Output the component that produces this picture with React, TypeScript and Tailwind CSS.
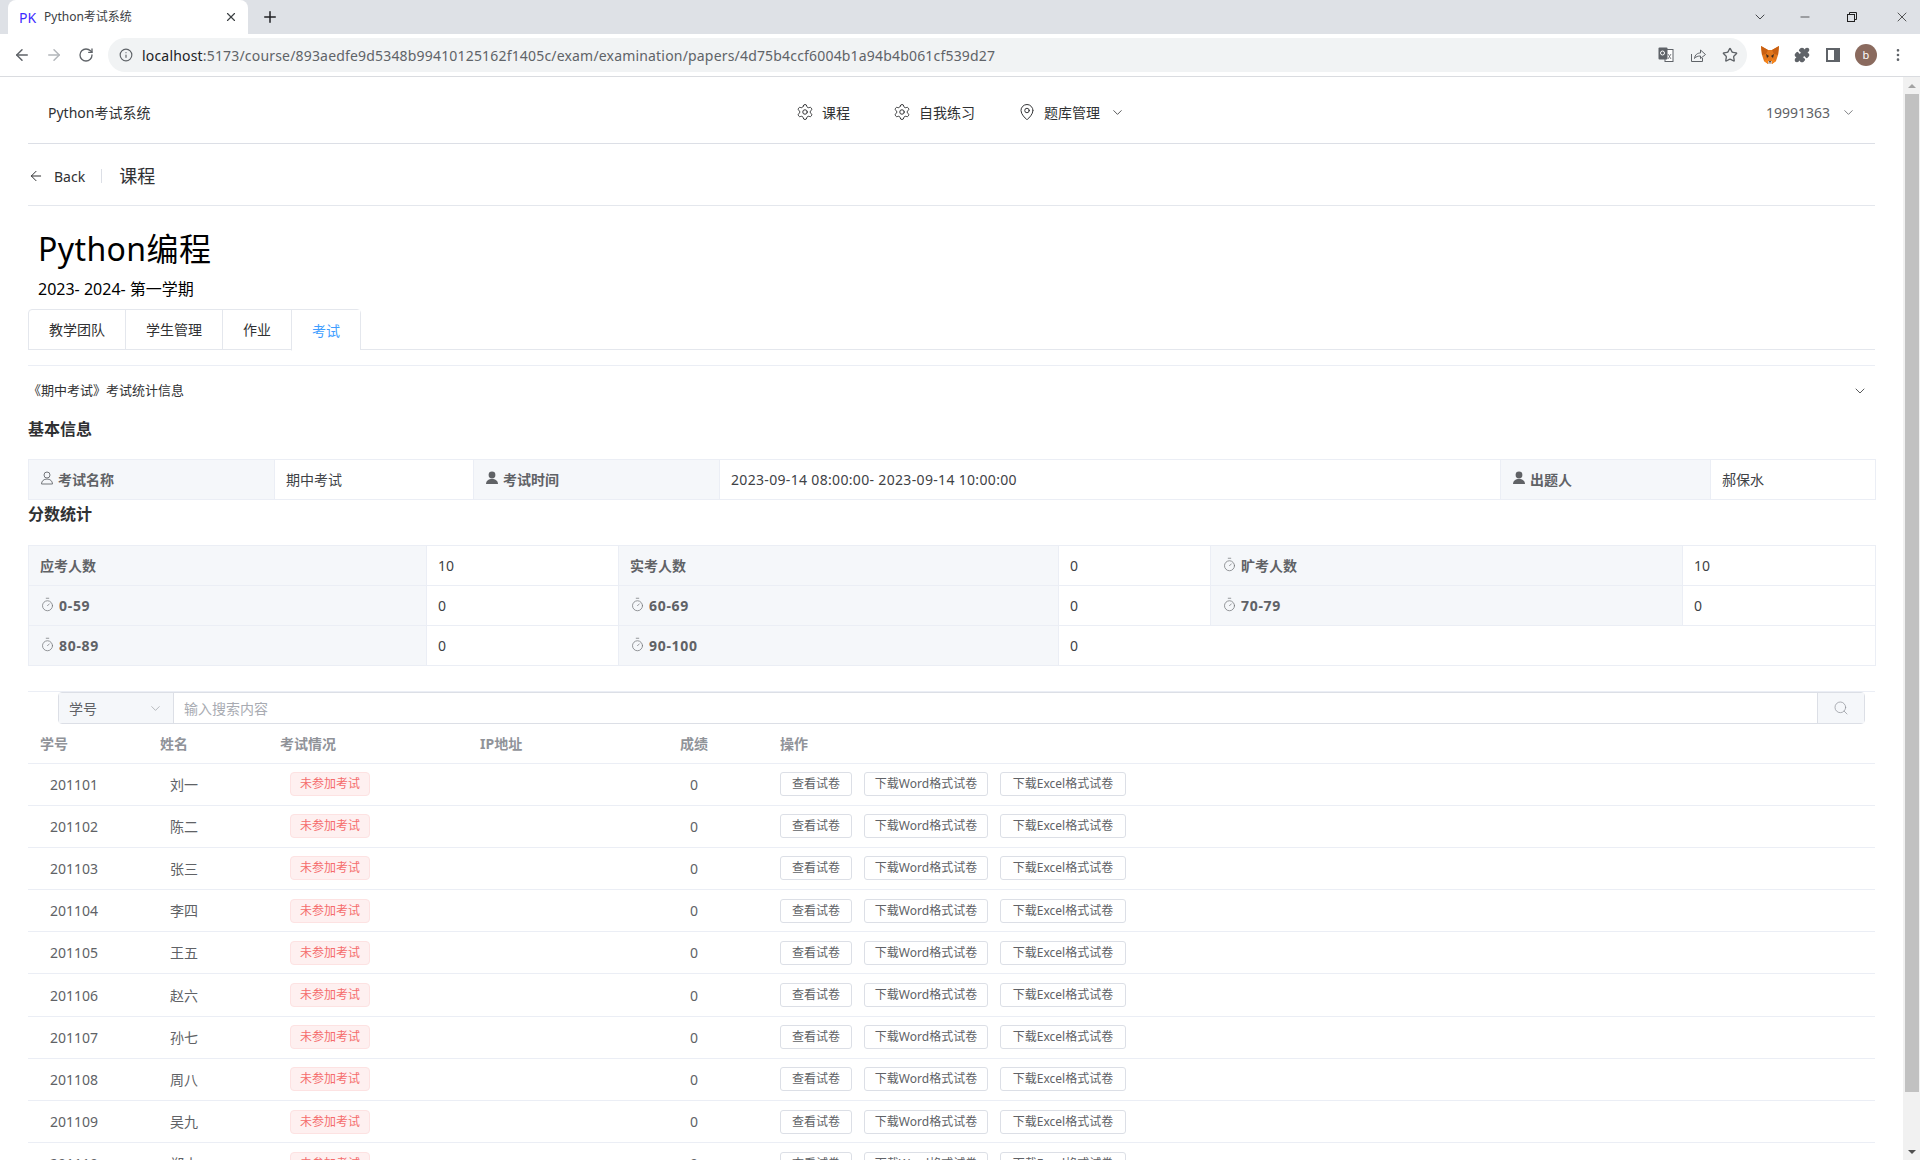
import { ArrowLeft, ArrowRight, ChevronDown, EllipsisVertical, Info, MapPin, Minus, Plus, Puzzle, RotateCw, Search, Settings, Star, Timer, X } from "lucide-react";

const STUDENTS = [
  ["201101", "刘一"],
  ["201102", "陈二"],
  ["201103", "张三"],
  ["201104", "李四"],
  ["201105", "王五"],
  ["201106", "赵六"],
  ["201107", "孙七"],
  ["201108", "周八"],
  ["201109", "吴九"],
  ["201110", "郑十"],
];

function UserOutline() {
  return (
    <svg viewBox="0 0 14 14" className="w-[14px] h-[14px] text-[#73767a] shrink-0 -mt-[3px]" fill="none" stroke="currentColor" strokeWidth="1">
      <circle cx="7" cy="4" r="3" />
      <path d="M1.500 13c0-3 2.400-5 5.500-5s5.500 2 5.500 5z" />
    </svg>
  );
}

function UserFilled() {
  return (
    <svg viewBox="0 0 14 14" className="w-[14px] h-[14px] text-[#606266] shrink-0 -mt-[3px]" fill="currentColor">
      <circle cx="7" cy="4" r="3.400" />
      <path d="M1 13c0-3 2.400-5 6-5s6 2 6 5z" />
    </svg>
  );
}

function Fox() {
  return (
    <svg viewBox="0 0 20 20" className="w-[20px] h-[20px]">
      <polygon points="1,1 8,5 12,5 19,1 18,10 16,16 12,19 8,19 4,16 2,10" fill="#e2761b" />
      <polygon points="1,1 8,5 6,9 2,10" fill="#c95f10" />
      <polygon points="19,1 12,5 14,9 18,10" fill="#c95f10" />
      <polygon points="6,9 9,11 7,13" fill="#3b2a20" />
      <polygon points="14,9 11,11 13,13" fill="#3b2a20" />
      <polygon points="8,16 12,16 12,19 8,19" fill="#d7c1b3" />
      <polygon points="9,16 11,16 10,18" fill="#2a2a2a" />
      <polygon points="4,16 8,14 8,19" fill="#f6851b" />
      <polygon points="16,16 12,14 12,19" fill="#f6851b" />
    </svg>
  );
}

function Translate() {
  return (
    <svg viewBox="0 0 16 16" className="w-[16px] h-[16px]">
      <rect x="7" y="2.500" width="8" height="12" fill="#fff" stroke="#5f6368" />
      <rect x="0.500" y="0.500" width="9" height="12" rx="1" fill="#5f6368" />
      <circle cx="4.500" cy="6" r="2" fill="none" stroke="#fff" />
      <path d="M10 7l3 5M13 7l-3 5" stroke="#5f6368" strokeWidth="0.800" />
    </svg>
  );
}

function ShareIcon() {
  return (
    <svg viewBox="0 0 16 16" className="w-[16px] h-[16px]" fill="none" stroke="#5f6368" strokeWidth="1">
      <path d="M1.500 7v7.500h11V11" />
      <path d="M4.500 11.500c.5-4 3-5.500 6-5.500V3l5 4.500-5 4V9c-2.500 0-4.500.5-6 2.500z" />
    </svg>
  );
}

function Restore() {
  return (
    <svg viewBox="0 0 10 10" className="w-[10px] h-[10px]" fill="none" stroke="#1f1f1f" strokeWidth="1">
      <rect x="0.500" y="2.500" width="7" height="7" />
      <path d="M2.500 2.500v-2h7v7h-2" />
    </svg>
  );
}

function BrowserChrome() {
  return (
    <div className="shrink-0 border-b border-[#dadce0]">
      <div className="h-[34px] bg-[#dee1e6] flex items-end pl-[8px] pr-0">
        <div className="w-[240px] h-[34px] bg-white rounded-t-[8px] flex items-center pl-[11px] pr-[10px]">
          <span className="text-[14px] text-[#3d2bff] w-[25px]">PK</span>
          <span className="text-[12px] text-[#3c4043] flex-1">Python考试系统</span>
          <X size={14} className="text-[#3c4043]" />
        </div>
        <div className="h-[34px] flex items-center ml-[13px]">
          <Plus size={18} className="text-[#202124]" />
        </div>
        <div className="ml-auto h-[34px] flex items-center">
          <ChevronDown size={16} strokeWidth={1.200} className="text-[#202124] mr-[30px]" />
          <Minus size={14} strokeWidth={1.200} className="text-[#1f1f1f] mr-[35px]" />
          <Restore />
          <X size={16} strokeWidth={1.100} className="text-[#1f1f1f] ml-[37px] mr-[10px]" />
        </div>
      </div>
      <div className="h-[42px] bg-white flex items-center pl-[13px]">
        <ArrowLeft size={18} className="text-[#5f6368]" />
        <ArrowRight size={18} className="text-[#b3b6ba] ml-[14px]" />
        <RotateCw size={16} className="text-[#5f6368] ml-[15px]" />
        <div className="h-[34px] w-[1639px] ml-[14px] rounded-full bg-[#f1f3f4] flex items-center pl-[11px] pr-[9px]">
          <Info size={14} className="text-[#5f6368]" />
          <span className="ml-[9px] text-[14px] tracking-[0.18px] text-[#5f6368] flex-1 whitespace-nowrap">
            <span className="text-[#202124]">localhost</span>:5173/course/893aedfe9d5348b99410125162f1405c/exam/examination/papers/4d75b4ccf6004b1a94b4b061cf539d27
          </span>
          <Translate />
          <span className="ml-[16px]"><ShareIcon /></span>
          <Star size={16} className="ml-[16px] text-[#5f6368]" />
        </div>
        <div className="ml-[13px]"><Fox /></div>
        <Puzzle size={16} className="ml-[14px] text-[#5f6368]" fill="#5f6368" />
        <div className="ml-[16px] w-[14px] h-[14px] border-[2px] border-r-[6px] border-[#5f6368]" />
        <div className="ml-[15px] w-[22px] h-[22px] rounded-full bg-[#8a6a5e] text-white text-[11px] flex items-center justify-center">b</div>
        <EllipsisVertical size={16} className="ml-[13px] text-[#5f6368]" />
      </div>
    </div>
  );
}

function TopNav() {
  return (
    <div className="h-[67px] pt-[4px] border-b border-[#dcdfe6] flex items-center text-[14px] text-[#303133]">
      <div className="w-[768px] pl-[20px]">Python考试系统</div>
      <div className="flex items-center gap-[43px]">
        <div className="flex items-center gap-[8px]">
          <Settings size={18} strokeWidth={1.300} />
          <span>课程</span>
        </div>
        <div className="flex items-center gap-[8px]">
          <Settings size={18} strokeWidth={1.300} />
          <span>自我练习</span>
        </div>
        <div className="flex items-center gap-[8px]">
          <MapPin size={18} strokeWidth={1.300} />
          <span>题库管理</span>
          <ChevronDown size={15} strokeWidth={1.300} className="ml-[2px]" />
        </div>
      </div>
      <div className="ml-auto flex items-center gap-[11px] pr-[19px] text-[#606266]">
        <span>19991363</span>
        <ChevronDown size={15} strokeWidth={1.300} />
      </div>
    </div>
  );
}

function PageHeader() {
  return (
    <>
      <div className="h-[62px] pt-[3px] border-b border-[#e4e7ed] flex items-center text-[#303133]">
        <ArrowLeft size={16} strokeWidth={1.500} />
        <span className="ml-[10px] text-[14px]">Back</span>
        <span className="ml-[16px] mr-[17px] h-[14px] w-px bg-[#dcdfe6]" />
        <span className="text-[18px]">课程</span>
      </div>
      <div className="pl-[10px] pt-[20px] text-black">
        <div className="text-[32px] leading-[46px] tracking-[0.4px]">Python编程</div>
        <div className="mt-[5px] text-[16px] leading-[24px]">2023- 2024- 第一学期</div>
      </div>
    </>
  );
}

function Tabs() {
  const tabs = ["教学团队", "学生管理", "作业", "考试"];
  return (
    <div className="mt-[8px] h-[41px] border-b border-[#e4e7ed] flex text-[14px] text-[#303133]">
      <div className="flex h-[41px] border border-[#e4e7ed] rounded-t-[4px]">
        {tabs.map((t, i) => (
          <div
            key={t}
            className={
              i === 3
                ? "h-[41px] px-[20px] flex items-center border-l border-[#e4e7ed] bg-white text-[#409eff] border-b border-b-white"
                : i === 0
                  ? "h-[39px] px-[20px] flex items-center"
                  : "h-[39px] px-[20px] flex items-center border-l border-[#e4e7ed]"
            }
          >
            {t}
          </div>
        ))}
      </div>
    </div>
  );
}

function Label({ icon, text }: { icon?: "user" | "userFilled" | "timer"; text: string }) {
  return (
    <td className="bg-[#f5f7fa] border border-[#ebeef5] pl-[11px] text-[14px] font-bold text-[#606266]">
      <span className="flex items-center gap-[4px]">
        {icon === "user" && <UserOutline />}
        {icon === "userFilled" && <UserFilled />}
        {icon === "timer" && <Timer size={15} strokeWidth={1.200} className="text-[#73767a] -mt-[3px]" />}
        <span className={/\d/.test(text) ? "tracking-[0.7px]" : ""}>{text}</span>
      </span>
    </td>
  );
}

function Value({ text, span, wide }: { text?: string; span?: number; wide?: boolean }) {
  return (
    <td colSpan={span} className={wide ? "border border-[#ebeef5] pl-[11px] text-[14px] tracking-[0.33px] text-[#404246]" : "border border-[#ebeef5] pl-[11px] text-[14px] text-[#404246]"}>
      {text}
    </td>
  );
}

function Stats() {
  return (
    <div>
      <div className="mt-[15px] h-[50px] border-t border-[#ebeef5] flex items-center justify-between pr-[7px] text-[13px] text-[#303133]">
        <span>《期中考试》考试统计信息</span>
        <ChevronDown size={16} strokeWidth={1.200} />
      </div>
      <div className="text-[16px] font-bold text-[#303133] leading-[28px]">基本信息</div>
      <table className="mt-[16px] w-[1847px] table-fixed border-collapse">
        <colgroup>
          <col className="w-[246px]" />
          <col className="w-[199px]" />
          <col className="w-[246px]" />
          <col className="w-[781px]" />
          <col className="w-[210px]" />
          <col className="w-[165px]" />
        </colgroup>
        <tbody>
          <tr className="h-[40px]">
            <Label icon="user" text="考试名称" />
            <Value text="期中考试" />
            <Label icon="userFilled" text="考试时间" />
            <Value wide text="2023-09-14 08:00:00- 2023-09-14 10:00:00" />
            <Label icon="userFilled" text="出题人" />
            <Value text="郝保水" />
          </tr>
        </tbody>
      </table>
      <div className="text-[16px] font-bold text-[#303133] leading-[28px]">分数统计</div>
      <table className="mt-[17px] w-[1847px] table-fixed border-collapse">
        <colgroup>
          <col className="w-[398px]" />
          <col className="w-[192px]" />
          <col className="w-[440px]" />
          <col className="w-[152px]" />
          <col className="w-[472px]" />
          <col className="w-[193px]" />
        </colgroup>
        <tbody>
          <tr className="h-[40px]">
            <Label text="应考人数" />
            <Value text="10" />
            <Label text="实考人数" />
            <Value text="0" />
            <Label icon="timer" text="旷考人数" />
            <Value text="10" />
          </tr>
          <tr className="h-[40px]">
            <Label icon="timer" text="0-59" />
            <Value text="0" />
            <Label icon="timer" text="60-69" />
            <Value text="0" />
            <Label icon="timer" text="70-79" />
            <Value text="0" />
          </tr>
          <tr className="h-[40px]">
            <Label icon="timer" text="80-89" />
            <Value text="0" />
            <Label icon="timer" text="90-100" />
            <Value text="0" span={3} />
          </tr>
        </tbody>
      </table>
    </div>
  );
}

function SearchBar() {
  return (
    <div className="mt-[25px] border-t border-[#ebeef5] pl-[30px] pr-[10px]">
      <div className="h-[32px] flex border border-[#dcdfe6] rounded-[4px] text-[14px]">
        <div className="w-[115px] bg-[#f5f7fa] border-r border-[#dcdfe6] flex items-center justify-between pl-[10px] pr-[10px] text-[#606266]">
          <span>学号</span>
          <ChevronDown size={15} strokeWidth={1} className="text-[#909399]" />
        </div>
        <div className="flex-1 flex items-center pl-[10px] text-[#a8abb2]">输入搜索内容</div>
        <div className="w-[47px] bg-[#f5f7fa] border-l border-[#dcdfe6] flex items-center justify-center">
          <Search size={16} strokeWidth={1.100} className="text-[#909399]" />
        </div>
      </div>
    </div>
  );
}

function ActionButton({ text, width }: { text: string; width: string }) {
  return (
    <button className={`${width} h-[24px] border border-[#dcdfe6] rounded-[3px] text-[12px] text-[#606266] bg-white`}>
      {text}
    </button>
  );
}

function StudentTable() {
  return (
    <table className="w-[1847px] table-fixed border-collapse text-[14px] text-[#606266]">
      <colgroup>
        <col className="w-[120px]" />
        <col className="w-[120px]" />
        <col className="w-[200px]" />
        <col className="w-[200px]" />
        <col className="w-[100px]" />
        <col />
      </colgroup>
      <thead>
        <tr className="h-[39px] border-b border-[#ebeef5] text-left text-[#909399]">
          <th className="pl-[12px] font-bold">学号</th>
          <th className="pl-[12px] font-bold">姓名</th>
          <th className="pl-[12px] font-bold">考试情况</th>
          <th className="pl-[12px] font-bold">IP地址</th>
          <th className="pl-[12px] font-bold">成绩</th>
          <th className="pl-[12px] font-bold">操作</th>
        </tr>
      </thead>
      <tbody>
        {STUDENTS.map(([id, name]) => (
          <tr key={id} className="h-[42.200px] border-b border-[#ebeef5]">
            <td className="pl-[22px]">{id}</td>
            <td className="pl-[22px]">{name}</td>
            <td className="pl-[22px]">
              <span className="inline-flex items-center h-[24px] px-[9px] rounded-[4px] border border-[#fde2e2] bg-[#fef0f0] text-[12px] text-[#f56c6c]">
                未参加考试
              </span>
            </td>
            <td />
            <td className="pl-[22px]">0</td>
            <td className="pl-[12px]">
              <div className="flex gap-[12px]">
                <ActionButton text="查看试卷" width="w-[72px]" />
                <ActionButton text="下载Word格式试卷" width="w-[124px]" />
                <ActionButton text="下载Excel格式试卷" width="w-[126px]" />
              </div>
            </td>
          </tr>
        ))}
      </tbody>
    </table>
  );
}

function Scrollbar() {
  return (
    <div className="w-[17px] shrink-0 bg-[#f1f1f1] flex flex-col items-center">
      <div className="h-[17px] flex items-center justify-center">
        <div className="w-0 h-0 border-x-[4px] border-x-transparent border-b-[4px] border-b-[#a3a3a3]" />
      </div>
      <div className="w-[14px] h-[998px] bg-[#c1c1c1]" />
      <div className="mt-auto h-[17px] flex items-center justify-center">
        <div className="w-0 h-0 border-x-[4px] border-x-transparent border-t-[4px] border-t-[#505050]" />
      </div>
    </div>
  );
}

export default function App() {
  return (
    <div className="h-[1160px] w-[1920px] overflow-hidden flex flex-col bg-white font-['Noto_Sans','Noto_Sans_CJK_SC',sans-serif]">
      <BrowserChrome />
      <div className="flex-1 flex min-h-0">
        <div className="flex-1 min-w-0 overflow-hidden pl-[28px] pr-[28px]">
          <TopNav />
          <PageHeader />
          <Tabs />
          <Stats />
          <SearchBar />
          <StudentTable />
        </div>
        <Scrollbar />
      </div>
    </div>
  );
}
